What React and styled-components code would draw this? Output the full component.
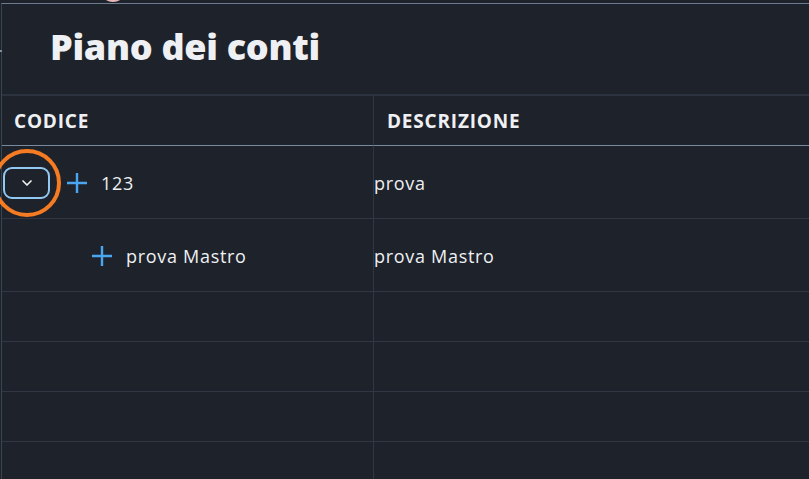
import React from "react";
import styled, { createGlobalStyle } from "styled-components";
import { ChevronDown } from "lucide-react";

const GlobalStyle = createGlobalStyle`
  html, body {
    margin: 0;
    padding: 0;
    background: #1e222a;
    overflow: hidden;
  }
  body {
    font-family: "Open Sans", "Noto Sans", Arial, sans-serif;
    color: #eef0f3;
  }
`;

const Page = styled.div`
  position: relative;
  width: 809px;
  height: 479px;
  padding-top: 3px;
  box-sizing: border-box;
`;

// avatar of the top bar, only its lower edge shows
const Avatar = styled.div`
  position: absolute;
  left: 100px;
  top: -22px;
  width: 26px;
  height: 24px;
  border-radius: 50%;
  background: radial-gradient(circle at 50% 80%, #f3c6c6, #b8707a);
`;

const Panel = styled.div`
  height: 100%;
  border-top: 1px solid #6b7c90;
  border-left: 1px solid #3a4350;
  margin-left: 1px;
  box-sizing: border-box;
  position: relative;
`;

const Tick = styled.div`
  position: absolute;
  left: -2px;
  top: 46px;
  width: 2px;
  height: 2px;
  background: #8090a0;
`;

const Title = styled.h1`
  margin: 0;
  height: 92px;
  padding-left: 48px;
  padding-bottom: 6px;
  display: flex;
  align-items: center;
  font-family: "Open Sans", sans-serif;
  font-weight: 800;
  font-size: 36px;
  letter-spacing: -0.3px;
  color: #eef0f3;
  border-bottom: 2px solid #2d333e;
  box-sizing: border-box;
`;

const Grid = styled.div`
  display: grid;
  grid-template-columns: 372px 1fr;
`;

const HeadCell = styled.div`
  height: 50px;
  display: flex;
  align-items: center;
  padding-left: ${(p) => p.$pad}px;
  font-family: "Open Sans", sans-serif;
  font-weight: 700;
  font-size: 19px;
  letter-spacing: 0.8px;
  color: #eef0f3;
  border-bottom: 1px solid #7a8a9e;
  border-right: ${(p) => (p.$last ? "none" : "1px solid #303743")};
  box-sizing: border-box;
`;

const Cell = styled.div`
  height: ${(p) => p.$h}px;
  display: flex;
  align-items: center;
  padding-left: ${(p) => p.$pad || 0}px;
  padding-top: 1px;
  font-size: 18px;
  letter-spacing: 0.7px;
  border-bottom: 1px solid #303743;
  border-right: ${(p) => (p.$last ? "none" : "1px solid #303743")};
  box-sizing: border-box;
`;

const ToggleWrap = styled.div`
  position: relative;
  margin-right: 17px;
`;

const Toggle = styled.button`
  width: 47px;
  height: 32px;
  border: 2.5px solid #92c8f2;
  border-radius: 9px;
  background: transparent;
  color: #f2f2f2;
  display: flex;
  align-items: center;
  justify-content: center;
  padding: 0;
`;

const Ring = styled.div`
  position: absolute;
  left: -10px;
  top: -18px;
  width: 68px;
  height: 68px;
  border: 4px solid #f57c22;
  border-radius: 50%;
  box-sizing: border-box;
  pointer-events: none;
`;

const AddSvg = styled.svg`
  flex-shrink: 0;
  margin-right: 14px;
`;

const AddIcon = () => (
  <AddSvg width="20" height="20" viewBox="0 0 20 20">
    <path d="M10 0V20M0 10H20" stroke="#4aa6f0" strokeWidth="2.4" fill="none" />
  </AddSvg>
);

const rows = [
  { code: "123", desc: "prova", level: 0, toggle: true },
  { code: "prova Mastro", desc: "prova Mastro", level: 1 },
];

export default function App() {
  return (
    <Page>
      <GlobalStyle />
      <Avatar />
      <Panel>
        <Tick />
        <Title>Piano dei conti</Title>
        <Grid>
          <HeadCell $pad={12}>CODICE</HeadCell>
          <HeadCell $pad={13} $last>
            DESCRIZIONE
          </HeadCell>
          {rows.map((r) => (
            <React.Fragment key={r.code}>
              <Cell $h={73} $pad={r.level === 0 ? 1 : 90}>
                {r.toggle && (
                  <ToggleWrap>
                    <Toggle>
                      <ChevronDown size={16} strokeWidth={2.5} />
                    </Toggle>
                    <Ring />
                  </ToggleWrap>
                )}
                <AddIcon />
                <span>{r.code}</span>
              </Cell>
              <Cell $h={73} $last>
                {r.desc}
              </Cell>
            </React.Fragment>
          ))}
          {[0, 1, 2, 3].map((i) => (
            <React.Fragment key={i}>
              <Cell $h={50} />
              <Cell $h={50} $last />
            </React.Fragment>
          ))}
        </Grid>
      </Panel>
    </Page>
  );
}
